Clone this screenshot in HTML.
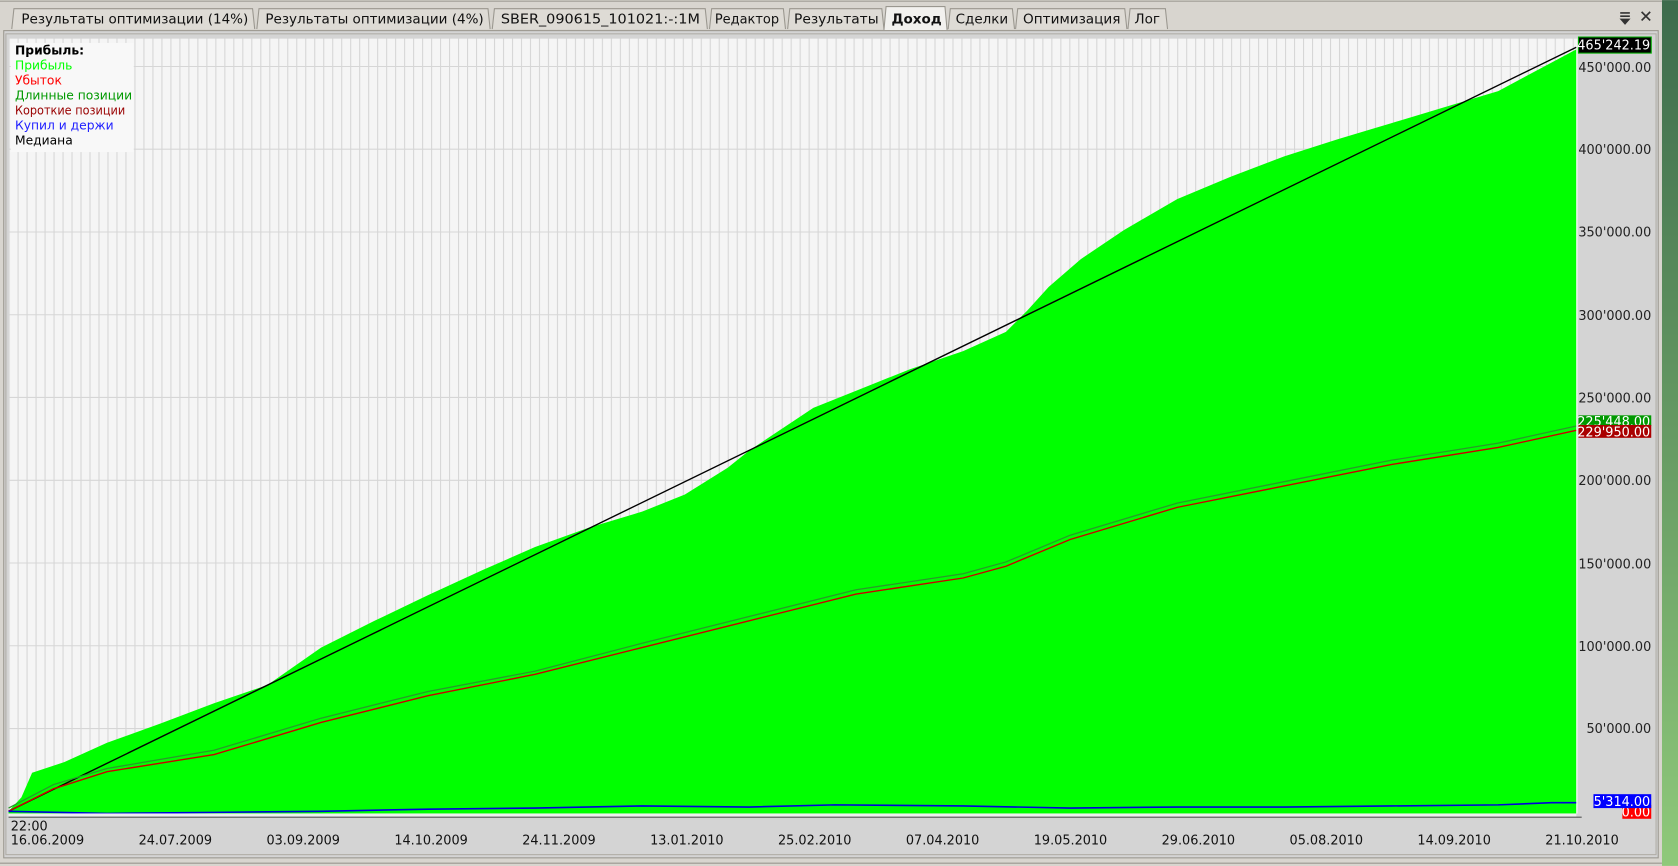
<!DOCTYPE html>
<html><head><meta charset="utf-8"><style>
html,body{margin:0;padding:0;background:#d4d0c8;overflow:hidden}
svg{display:block}
text{font-family:"DejaVu Sans","Liberation Sans",sans-serif}
</style></head><body>
<svg width="1678" height="866" viewBox="0 0 1568 809" xmlns="http://www.w3.org/2000/svg">
<defs>
<pattern id="vg" x="8" y="0" width="8.4" height="10" patternUnits="userSpaceOnUse">
<rect width="8.4" height="10" fill="#f5f5f5"/><rect x="0" width="1" height="10" fill="#d6d6d6"/>
</pattern>
<linearGradient id="gs" x1="0" y1="0" x2="0" y2="1"><stop offset="0" stop-color="#3d6b4c"/><stop offset="1" stop-color="#8fc97a"/></linearGradient>
</defs>
<rect width="1568" height="809" fill="#d4d0c8"/>
<rect x="1553" y="0" width="15" height="809" fill="url(#gs)"/>
<rect x="0" y="0" width="1553" height="809" fill="#d8d5cf"/>
<line x1="0" y1="1" x2="1553" y2="1" fill="none" stroke="#a09d96"/>
<g font-size="12" fill="#111">
<path d="M11 27 L13 8 H236 L238 27" fill="#dedbd5" stroke="#9a978f"/><text x="20" y="22" textLength="212" lengthAdjust="spacingAndGlyphs">Результаты оптимизации (14%)</text>
<path d="M240 27 L242 8 H456 L458 27" fill="#dedbd5" stroke="#9a978f"/><text x="248" y="22" textLength="204" lengthAdjust="spacingAndGlyphs">Результаты оптимизации (4%)</text>
<path d="M460 27 L462 8 H659 L661 27" fill="#dedbd5" stroke="#9a978f"/><text x="468" y="22" textLength="186" lengthAdjust="spacingAndGlyphs">SBER_090615_101021:-:1M</text>
<path d="M663 27 L665 8 H732 L734 27" fill="#dedbd5" stroke="#9a978f"/><text x="668" y="22" textLength="60" lengthAdjust="spacingAndGlyphs">Редактор</text>
<path d="M736 27 L738 8 H824 L826 27" fill="#dedbd5" stroke="#9a978f"/><text x="742" y="22" textLength="79" lengthAdjust="spacingAndGlyphs">Результаты</text>
<path d="M826 28 L828 6 H883 L885 28" fill="#f2f1ee" stroke="#9a978f"/><text x="833" y="22" font-weight="bold" textLength="47" lengthAdjust="spacingAndGlyphs">Доход</text>
<path d="M886 27 L888 8 H946 L948 27" fill="#dedbd5" stroke="#9a978f"/><text x="893" y="22" textLength="49" lengthAdjust="spacingAndGlyphs">Сделки</text>
<path d="M949 27 L951 8 H1051 L1053 27" fill="#dedbd5" stroke="#9a978f"/><text x="956" y="22" textLength="91" lengthAdjust="spacingAndGlyphs">Оптимизация</text>
<path d="M1054 27 L1056 8 H1089 L1091 27" fill="#dedbd5" stroke="#9a978f"/><text x="1060" y="22" textLength="24" lengthAdjust="spacingAndGlyphs">Лог</text>
</g>
<path d="M1514 12 h9 M1514 15 h9 M1515 18 l3.5 4 l3.5 -4z" stroke="#333" stroke-width="1.5" fill="#333"/>
<path d="M1534 11 l8 8 M1542 11 l-8 8" stroke="#333" stroke-width="1.6"/>
<rect x="3.5" y="28.5" width="1546" height="773" fill="#d4d4d4" stroke="#9a978f"/>
<rect x="5.5" y="31.5" width="1542" height="767" fill="none" stroke="#b0ada6"/>
<rect x="8" y="36" width="1465" height="724" fill="url(#vg)"/>
<g stroke="#d6d6d6" stroke-width="1">
<line x1="8" x2="1473" y1="62" y2="62"/><line x1="8" x2="1473" y1="139.3" y2="139.3"/><line x1="8" x2="1473" y1="216.7" y2="216.7"/><line x1="8" x2="1473" y1="294" y2="294"/><line x1="8" x2="1473" y1="371.3" y2="371.3"/><line x1="8" x2="1473" y1="448.7" y2="448.7"/><line x1="8" x2="1473" y1="526" y2="526"/><line x1="8" x2="1473" y1="603.3" y2="603.3"/><line x1="8" x2="1473" y1="680.7" y2="680.7"/>
</g>
<path d="M8 758 L20 745 L30 722 L60 712 L100 694 L150 676 L200 657 L250 640 L300 605 L350 580 L400 556 L450 533 L500 511 L550 493 L600 478 L640 462 L680 437 L700 421 L760 381 L800 365 L850 345 L900 328 L940 310 L960 290 L980 268 L1010 242 L1050 215 L1100 186 L1150 165 L1200 146 L1250 130 L1300 115 L1350 100 L1400 85 L1473 46 L1473 760 L8 760Z" fill="#00ff00"/>
<line x1="8" y1="758" x2="1473" y2="44" stroke="#000" stroke-width="1.3"/>
<path d="M8 755 L50 733 L100 718 L200 701 L300 671 L400 646 L500 627 L600 601 L700 576 L800 551 L900 536 L940 525 L1000 500 L1100 470 L1200 450 L1300 430 L1400 414 L1473 398" fill="none" stroke="#2a9a2a" stroke-width="1.2"/>
<path d="M8 758 L50 737 L100 721 L200 705 L300 675 L400 650 L500 630 L600 605 L700 580 L800 555 L900 540 L940 529 L1000 504 L1100 474 L1200 454 L1300 434 L1400 418 L1473 402" fill="none" stroke="#cc0000" stroke-width="1.3"/>
<path d="M8 758 L100 760 L200 759 L300 758 L400 756 L500 755 L600 753 L700 754 L780 752 L900 753 L1000 755 L1100 754 L1200 754 L1300 753 L1400 752 L1450 750 L1473 750" fill="none" stroke="#0000dd" stroke-width="1.5"/>
<rect x="10" y="40" width="115" height="102" fill="#f8f8f8"/>
<g font-size="11.5">
<text x="14" y="51" font-weight="bold" fill="#000">Прибыль:</text>
<text x="14" y="65" fill="#00ff00">Прибыль</text>
<text x="14" y="79" fill="#ff0000">Убыток</text>
<text x="14" y="93" fill="#009900">Длинные позиции</text>
<text x="14" y="107" fill="#990000" textLength="103" lengthAdjust="spacingAndGlyphs">Короткие позиции</text>
<text x="14" y="121" fill="#2020ff">Купил и держи</text>
<text x="14" y="135" fill="#000">Медиана</text>
</g>
<line x1="1473.5" y1="36" x2="1473.5" y2="760" stroke="#fff"/>
<g font-size="12" fill="#222" text-anchor="end">
<text x="1543" y="67">450'000.00</text><text x="1543" y="144">400'000.00</text><text x="1543" y="221">350'000.00</text><text x="1543" y="299">300'000.00</text><text x="1543" y="376">250'000.00</text><text x="1543" y="453">200'000.00</text><text x="1543" y="531">150'000.00</text><text x="1543" y="608">100'000.00</text><text x="1543" y="685">50'000.00</text>
</g>
<rect x="1475" y="34.5" width="68" height="15" fill="#000" stroke="#0a0"/>
<text x="1542" y="46" font-size="12" fill="#fff" text-anchor="end">465'242.19</text>
<rect x="1475" y="388" width="68" height="10" fill="#009900"/>
<text x="1542" y="398" font-size="12" fill="#fff" text-anchor="end">225'448.00</text>
<rect x="1475" y="397" width="68" height="12" fill="#aa0000"/>
<text x="1542" y="408" font-size="12" fill="#fff" text-anchor="end">229'950.00</text>
<rect x="1516" y="752" width="27" height="13" fill="#ff0000"/>
<text x="1542" y="763" font-size="12" fill="#fff" text-anchor="end">0.00</text>
<rect x="1489" y="742" width="54" height="13" fill="#0000ff"/>
<text x="1542" y="753" font-size="12" fill="#fff" text-anchor="end">5'314.00</text>
<rect x="8" y="760" width="1465" height="3" fill="#f0f0f0"/>
<line x1="8" y1="763.5" x2="1478" y2="763.5" stroke="#555"/>
<g font-size="12" fill="#111">
<text x="10" y="776">22:00</text>
<text x="10" y="789">16.06.2009</text><text x="129.5" y="789">24.07.2009</text><text x="249" y="789">03.09.2009</text><text x="368.5" y="789">14.10.2009</text><text x="488" y="789">24.11.2009</text><text x="607.5" y="789">13.01.2010</text><text x="727" y="789">25.02.2010</text><text x="846.5" y="789">07.04.2010</text><text x="966" y="789">19.05.2010</text><text x="1085.5" y="789">29.06.2010</text><text x="1205" y="789">05.08.2010</text><text x="1324.5" y="789">14.09.2010</text><text x="1444" y="789">21.10.2010</text>
</g>
<line x1="0" y1="806.5" x2="1553" y2="806.5" stroke="#9a978f"/>
</svg>
</body></html>
